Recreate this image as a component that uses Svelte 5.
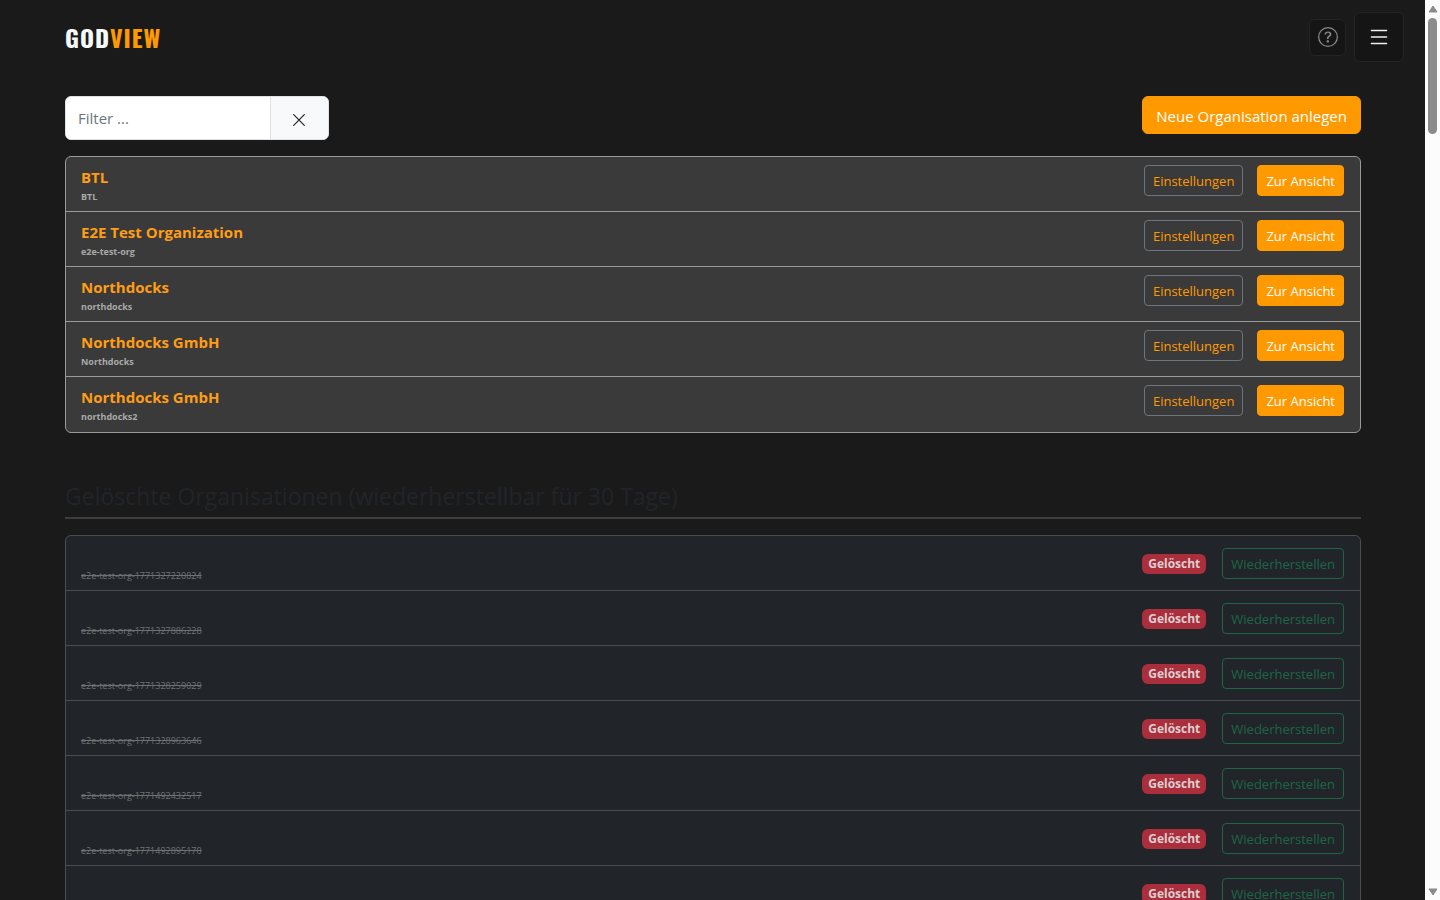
<script lang="ts">
  type Organisation = { name: string; slug: string }

  const organisations: Organisation[] = [
    { name: 'BTL', slug: 'BTL' },
    { name: 'E2E Test Organization', slug: 'e2e-test-org' },
    { name: 'Northdocks', slug: 'northdocks' },
    { name: 'Northdocks GmbH', slug: 'Northdocks' },
    { name: 'Northdocks GmbH', slug: 'northdocks2' },
  ]

  // Deleted organisations lose their name, only the slug is kept.
  const deleted = [
    'e2e-test-org-1771327220824',
    'e2e-test-org-1771327886228',
    'e2e-test-org-1771328259029',
    'e2e-test-org-1771328963646',
    'e2e-test-org-1771492432517',
    'e2e-test-org-1771492895170',
    '',
  ]

  let filter = $state('')

  let visible = $derived(
    organisations.filter((org) => `${org.name} ${org.slug}`.toLowerCase().includes(filter.toLowerCase())),
  )
</script>

<div class="window">
  <div class="page">
    <header class="topbar">
      <a class="logo" href="/">GOD<span>VIEW</span></a>
      <div class="tools">
        <button class="tool help" type="button" aria-label="Hilfe">
          <svg width="20" height="20" viewBox="0 0 16 16" fill="currentColor" aria-hidden="true">
            <path d="M8 15A7 7 0 1 1 8 1a7 7 0 0 1 0 14m0 1A8 8 0 1 0 8 0a8 8 0 0 0 0 16" />
            <path d="M5.255 5.786a.237.237 0 0 0 .241.247h.825c.138 0 .248-.113.266-.25.09-.656.54-1.134 1.342-1.134.686 0 1.314.343 1.314 1.168 0 .635-.374.927-.965 1.371-.673.489-1.206 1.06-1.168 1.987l.003.217a.25.25 0 0 0 .25.246h.811a.25.25 0 0 0 .25-.25v-.105c0-.718.273-.927 1.01-1.486.609-.463 1.244-.977 1.244-2.056 0-1.511-1.276-2.241-2.673-2.241-1.267 0-2.655.59-2.75 2.286m1.557 5.763c0 .533.425.927 1.01.927.609 0 1.028-.394 1.028-.927 0-.552-.42-.94-1.029-.94-.584 0-1.009.388-1.009.94" />
          </svg>
        </button>
        <button class="tool menu" type="button" aria-label="Menü">
          <svg width="24" height="24" viewBox="0 0 24 24" fill="none" stroke="currentColor" stroke-width="1.6" stroke-linecap="round" aria-hidden="true">
            <path d="M4.5 5.5h15M4.5 12h15M4.5 18.5h15" />
          </svg>
        </button>
      </div>
    </header>

    <main>
      <div class="actions">
        <div class="filter">
          <input type="text" placeholder="Filter ..." aria-label="Filter" bind:value={filter} />
          <button type="button" aria-label="Filter leeren" onclick={() => (filter = '')}>
            <svg width="12" height="12" viewBox="0 0 12 12" fill="none" stroke="currentColor" stroke-width="1.2" stroke-linecap="round" aria-hidden="true">
              <path d="M.7.7l10.6 10.6M11.3.7L.7 11.3" />
            </svg>
          </button>
        </div>
        <button class="btn primary large" type="button">Neue Organisation anlegen</button>
      </div>

      <ul class="list">
        {#each visible as org}
          <li>
            <div class="info">
              <strong>{org.name}</strong>
              <small>{org.slug}</small>
            </div>
            <div class="buttons">
              <button class="btn outline" type="button">Einstellungen</button>
              <button class="btn primary" type="button">Zur Ansicht</button>
            </div>
          </li>
        {/each}
      </ul>

      <h2>Gelöschte Organisationen (wiederherstellbar für 30 Tage)</h2>

      <ul class="list deleted">
        {#each deleted as slug}
          <li>
            <div class="info">
              <strong></strong>
              <small>{slug}</small>
            </div>
            <div class="buttons">
              <span class="badge">Gelöscht</span>
              <button class="btn restore" type="button">Wiederherstellen</button>
            </div>
          </li>
        {/each}
      </ul>
    </main>
  </div>

  <div class="scrollbar" aria-hidden="true">
    <svg width="10" height="8" viewBox="0 0 10 8"><path d="M5 1l4 6H1z" fill="#8b8b8b" stroke="#8b8b8b" stroke-linejoin="round" /></svg>
    <div class="thumb"></div>
    <svg width="10" height="8" viewBox="0 0 10 8"><path d="M5 7L1 1h8z" fill="#8b8b8b" stroke="#8b8b8b" stroke-linejoin="round" /></svg>
  </div>
</div>

<style>
  :global(body) {
    margin: 0;
    background: #1a1a1a;
  }

  .window {
    display: flex;
    height: 100vh;
    overflow: hidden;
    font-family: 'Segoe UI', 'Open Sans', 'Noto Sans', sans-serif;
    font-size: 15px;
    color: #212529;
  }

  .page {
    flex: 1;
    min-width: 0;
    overflow: hidden;
  }

  .topbar {
    display: flex;
    align-items: center;
    justify-content: space-between;
    padding: 12px 21px 0 65px;
  }

  .logo {
    font-family: Oswald, 'Liberation Sans Narrow', 'Open Sans', sans-serif;
    font-size: 24px;
    font-weight: 700;
    line-height: 50px;
    letter-spacing: 1px;
    color: #f8f9fa;
    text-decoration: none;
  }

  .logo span {
    color: #ff9900;
  }

  .tools {
    display: flex;
    align-items: center;
    gap: 8px;
  }

  .tool {
    display: grid;
    place-items: center;
    padding: 0;
    border: 1px solid #232323;
    border-radius: 6px;
    background: #151515;
  }

  .help {
    width: 37px;
    height: 37px;
    color: #8a8a8a;
  }

  .menu {
    width: 50px;
    height: 50px;
    color: #f0f0f0;
  }

  main {
    padding: 34px 64px 0 65px;
  }

  .actions {
    display: flex;
    align-items: flex-start;
    justify-content: space-between;
    margin-bottom: 16px;
  }

  .filter {
    display: flex;
    width: 264px;
    height: 44px;
    box-sizing: border-box;
    overflow: hidden;
    border: 1px solid #dee2e6;
    border-radius: 6px;
    background: #fff;
  }

  .filter input {
    flex: 1;
    min-width: 0;
    padding: 2px 12px;
    border: 0;
    outline: 0;
    font: inherit;
    color: #212529;
    background: #fff;
  }

  .filter input::placeholder {
    color: #6c757d;
    opacity: 1;
  }

  .filter button {
    display: grid;
    place-items: center;
    width: 58px;
    padding: 4px 2px 0 0;
    border: 0;
    border-left: 1px solid #dee2e6;
    background: #f8f9fa;
    color: #212529;
  }

  .btn {
    height: 31px;
    box-sizing: border-box;
    padding: 0 8px;
    border: 1px solid transparent;
    border-radius: 4px;
    font-family: inherit;
    font-size: 13px;
    line-height: 20px;
    white-space: nowrap;
    background: transparent;
  }

  .primary {
    border-color: #ff9900;
    background: #ff9900;
    color: #fff;
  }

  .large {
    height: 38px;
    padding: 2px 13px 0;
    border-radius: 6px;
    font-size: 15px;
  }

  .outline {
    border-color: #6c757d;
    color: #ff9900;
  }

  .list {
    margin: 0;
    padding: 0;
    list-style: none;
    overflow: hidden;
    border: 1px solid #9a9a9a;
    border-radius: 6px;
    background: #3a3a3a;
  }

  .list li {
    display: flex;
    align-items: flex-start;
    justify-content: space-between;
    height: 55px;
    box-sizing: border-box;
    padding: 8px 16px 8px 15px;
    border-bottom: 1px solid #9a9a9a;
  }

  .list li:last-child {
    border-bottom: 0;
  }

  .info {
    display: flex;
    flex-direction: column;
  }

  .info strong {
    height: 24px;
    font-size: 15px;
    line-height: 25px;
    color: #ff9d14;
  }

  .info small {
    font-size: 9px;
    font-weight: 700;
    line-height: 16px;
    color: #a9a9a9;
  }

  .buttons {
    display: flex;
    align-items: center;
    gap: 14px;
  }

  h2 {
    margin: 48px 0 16px;
    padding-bottom: 6px;
    border-bottom: 2px solid #3d3d3d;
    font-size: 23px;
    font-weight: 500;
    line-height: 30px;
    color: #212529;
  }

  .deleted {
    border-color: #4a4d4f;
    background: #212529;
  }

  .deleted li {
    padding-top: 12px;
    border-color: #4a4d4f;
  }

  .deleted .info strong {
    height: 20px;
  }

  .deleted .info small {
    font-weight: 400;
    color: #6f7274;
    text-decoration: line-through;
  }

  .deleted .buttons {
    gap: 16px;
  }

  .badge {
    padding: 0 6px;
    border-radius: 6px;
    font-size: 12px;
    font-weight: 700;
    line-height: 20px;
    color: #dccfd1;
    background: #aa2e3b;
  }

  .restore {
    border-color: #1d6545;
    color: #1d6545;
  }

  .scrollbar {
    display: flex;
    flex-direction: column;
    align-items: center;
    width: 15px;
    box-sizing: border-box;
    padding: 5px 0 4px;
    background: #fcfcfc;
  }

  .thumb {
    width: 9px;
    height: 116px;
    margin: 5px 0 auto;
    border-radius: 5px;
    background: #8b8b8b;
  }
</style>
